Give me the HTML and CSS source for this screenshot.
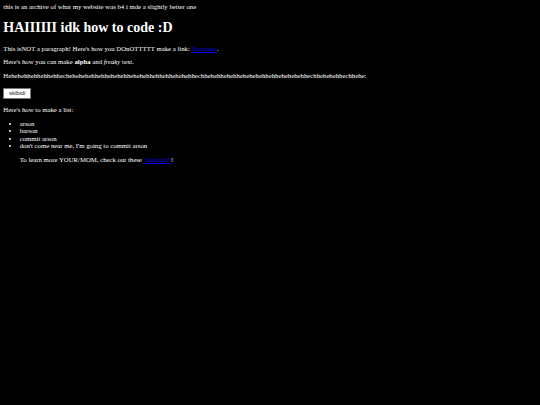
FILE: index.html
```html
<!DOCTYPE html>
<html>
<head>
<meta charset="utf-8">
<link rel="stylesheet" href="styles.css">
</head>
<body class="page">
<div class="note">this is an archive of what my website was b4 i mde a slightly better one</div>
<h1 class="title">HAIIIIII idk how to code :D</h1>
<p class="para">This isNOT a paragraph! Here's how you DOnOTTTTT make a link: <a class="link" href="#">Neocities</a>.</p>
<p class="para">Here's how you can make <b>alpha</b> and <i>freaky</i> text.</p>
<p class="para">Hehehehhehhehhehhechehehehehhehhehehehhehehehhehhehhehehehhechhehehhehehhehehehehhehhehehehehhechhehehehhechhehe:</p>
<div class="btnrow"><button class="btn">skibidi</button></div>
<p class="para">Here's how to make a list:</p>
<ul class="list">
<li>arson</li>
<li>barson</li>
<li>commit arson</li>
<li>don't come near me, I'm going to commit arson</li>
</ul>
<blockquote class="quote">To learn more YOUR/MOM, check out these <a class="link" href="#">"tutorials"</a>!</blockquote>
</body>
</html>
```
FILE: styles.css
```css
html {
  background: #000;
}
.page {
  margin: 3.3px;
  background: #000;
  color: #fff;
  font-family: "Liberation Serif", "Times New Roman", serif;
  font-size: 6.75px;
  line-height: 7.4px;
}
.note {
  margin: 0;
}
.title {
  font-size: 14px;
  line-height: 16px;
  font-weight: bold;
  margin: 9.4px 0 8.5px;
}
.para {
  margin: 6.4px 0;
}
.link {
  color: #0000ee;
  text-decoration: underline;
}
.btnrow {
  padding: 1.6px 0 1.3px;
  height: 11px;
  line-height: 11px;
}
.btn {
  display: block;
  font-family: "Liberation Sans", Arial, sans-serif;
  font-size: 5.8px;
  line-height: 7px;
  height: 11px;
  background: #fff;
  color: #111;
  border: 0.8px solid #767676;
  padding: 1.5px 4.8px;
  margin: 0;
}
.list {
  margin: 6.4px 0;
  padding-left: 16.4px;
}
.quote {
  margin: 6.4px 16.4px;
}
```
